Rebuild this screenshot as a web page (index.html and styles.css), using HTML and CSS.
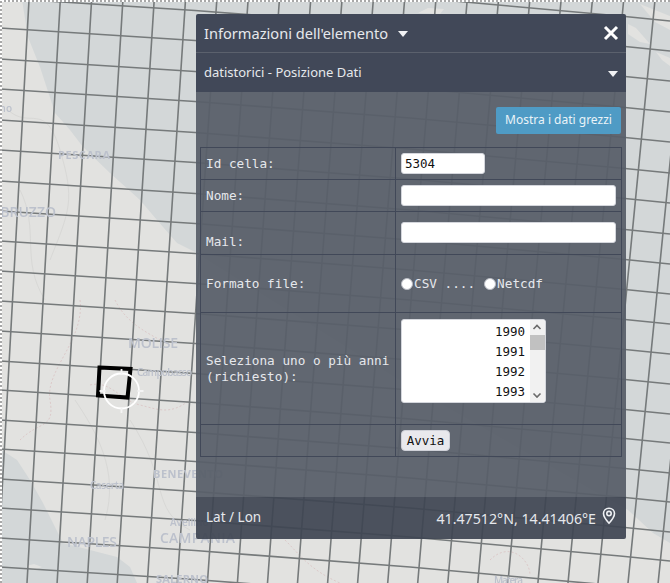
FILE: index.html
```html
<!DOCTYPE html>
<html lang="en">
<head>
    <meta charset="UTF-8">
    <meta name="viewport" content="width=device-width, initial-scale=1.0">
    <link rel="stylesheet" href="styles.css">
    <title>Informazioni dell'elemento</title>
</head>
<body>

  <svg class="map" viewBox="0 0 670 583" width="670" height="583">
    <defs>
      <polyline id="hline" points="0,0 195,12.5 410,29 620,48 670,53"/>
    </defs>
    <rect class="land" width="670" height="583"/>
    <!-- adriatic -->
    <polygon class="sea" points="22,0 28,37 40,67 55,113 70,130 83,147 110,173 140,200 157,220 177,243 197,253 400,380 628,510 653,533 670,543 670,0"/>
    <polygon class="land" points="640,4 670,16 670,30 655,22"/>
    <polygon class="land" points="628,24 636,28 650,44 640,42 628,34"/>
    <polygon class="land" points="656,52 670,58 670,66 662,60"/>
    <polygon class="land" points="418,13 428,8 444,9 440,14"/>
    <!-- tirreno -->
    <polygon class="sea" points="0,449 17,460 30,480 43,503 55,527 63,543 90,550 117,557 130,567 137,583 0,583"/>
    <polygon class="land" points="26,566 34,564 42,567 34,570"/>
    <!-- roads and borders -->
    <path class="road" d="M8 110C30 130 45 100 60 150S70 210 50 260M75 400C95 430 120 470 105 520M130 420C170 480 150 510 190 530M20 190C40 230 20 260 45 300"/>
    <path class="border" d="M80 300C85 340 45 370 50 400S40 420 20 440M90 385C110 380 120 400 140 405S170 415 190 400M115 300C125 320 140 330 170 345M285 540C300 555 310 570 340 583M490 560C510 540 530 560 530 575"/>
    <!-- grid -->
    <g class="grid">
      <path d="M29 0L-3 583M60.3 0L27 583M91.6 0L57.1 583M122.9 0L87.2 583M154.2 0L117.2 583M185.5 0L147.3 583M216.8 0L177.3 583M248.1 0L207.4 583M279.4 0L237.4 583M310.7 0L267.5 583M342 0L297.5 583M373.3 0L327.6 583M404.6 0L357.6 583M435.9 0L387.7 583M467.2 0L417.7 583M498.5 0L447.8 583M529.8 0L477.8 583M561.1 0L507.9 583M592.4 0L537.9 583M623.7 0L568 583M655 0L598 583M686.3 0L628 583M717.6 0L658.1 583M748.9 0L688 583"/>
      <use href="#hline" y="-32"/>
      <use href="#hline" y="-2"/>
      <use href="#hline" y="28"/>
      <use href="#hline" y="59"/>
      <use href="#hline" y="89"/>
      <use href="#hline" y="120"/>
      <use href="#hline" y="150"/>
      <use href="#hline" y="181"/>
      <use href="#hline" y="211"/>
      <use href="#hline" y="241"/>
      <use href="#hline" y="271"/>
      <use href="#hline" y="301"/>
      <use href="#hline" y="331"/>
      <use href="#hline" y="361"/>
      <use href="#hline" y="390"/>
      <use href="#hline" y="420"/>
      <use href="#hline" y="449"/>
      <use href="#hline" y="479"/>
      <use href="#hline" y="508"/>
      <use href="#hline" y="538"/>
      <use href="#hline" y="567"/>
    </g>
    <!-- place names -->
    <text class="city" x="58" y="159" textLength="52">PESCARA</text>
    <text class="region" x="56" y="217" text-anchor="end">ABRUZZO</text>
    <text class="town" x="12" y="112" text-anchor="end">Teramo</text>
    <text class="region" x="128" y="348" textLength="50">MOLISE</text>
    <text class="town" x="137" y="376" textLength="55">Campobasso</text>
    <text class="town" x="90" y="489" textLength="34">Caserta</text>
    <text class="city" x="153" y="478" textLength="70">BENEVENTO</text>
    <text class="town" x="170" y="526">Avellino</text>
    <text class="region" x="160" y="543" textLength="75">CAMPANIA</text>
    <text class="region" x="67" y="547" textLength="50">NAPLES</text>
    <text class="city" x="156" y="583" textLength="52">SALERNO</text>
    <text class="town" x="494" y="584" textLength="29">Matera</text>
  </svg>

  <svg class="marker" viewBox="0 0 670 583" width="670" height="583">
    <polygon class="cellBox" points="99.5,367.5 130.5,369 127.5,397.5 98,395.5"/>
    <circle class="targetRing" cx="121.5" cy="391" r="17.5"/>
    <path class="targetTick" d="M121.5 369V375M121.5 407V413M99.5 391H105.5M137.5 391H143.5"/>
  </svg>

  <div class="edgeTop"></div>
  <div class="edgeLeft"></div>

  <div class="panel">
    <div class="panelHead">
      <span class="panelTitle">Informazioni dell'elemento</span>
      <span class="caret"></span>
      <svg class="closeIcon" viewBox="0 0 16 16" width="16" height="16">
        <path d="M2 2L14 14M14 2L2 14"/>
      </svg>
    </div>
    <div class="panelSub">
      <span class="subTitle">datistorici - Posizione Dati</span>
      <span class="caret"></span>
    </div>
    <div class="panelBody">
      <div class="rawRow">
        <a class="rawBtn">Mostra i dati grezzi</a>
      </div>
      <table class="formTable">
        <colgroup>
          <col class="colLabel">
          <col>
        </colgroup>
        <tr class="rowId">
          <td>Id cella:</td>
          <td><input class="idInput" type="text" value="5304"></td>
        </tr>
        <tr class="rowName">
          <td>Nome:</td>
          <td><input class="textInput" type="text"></td>
        </tr>
        <tr class="rowMail">
          <td class="lowLabel">Mail:</td>
          <td class="topCell"><input class="textInput" type="text"></td>
        </tr>
        <tr class="rowFormat">
          <td>Formato file:</td>
          <td>
            <div class="radios">
              <input type="radio" name="fmt"><span>CSV ....</span>
              <input class="radioTwo" type="radio" name="fmt"><span>Netcdf</span>
            </div>
          </td>
        </tr>
        <tr class="rowYears">
          <td>Seleziona uno o più anni (richiesto):</td>
          <td class="yearCell">
            <div class="yearBox">
              <div class="yearList">
                <div>1990</div>
                <div>1991</div>
                <div>1992</div>
                <div>1993</div>
              </div>
              <div class="yearScroll">
                <svg viewBox="0 0 14 14" width="14" height="14"><path d="M3.5 9L7 5.5L10.5 9"/></svg>
                <div class="yearThumb"></div>
                <svg class="scrollDown" viewBox="0 0 14 14" width="14" height="14"><path d="M3.5 5.5L7 9L10.5 5.5"/></svg>
              </div>
            </div>
          </td>
        </tr>
        <tr class="rowStart">
          <td></td>
          <td><button class="startBtn" type="button">Avvia</button></td>
        </tr>
      </table>
    </div>
    <div class="panelFoot">
      <span class="footLabel">Lat / Lon</span>
      <div class="coords">
        <span>41.47512°N, 14.41406°E</span>
        <svg class="pinIcon" viewBox="0 0 14 18" width="14" height="18">
          <path d="M7 1.2C3.8 1.2 1.5 3.6 1.5 6.6C1.5 10.4 7 16.2 7 16.2S12.5 10.4 12.5 6.6C12.5 3.6 10.2 1.2 7 1.2Z"/>
          <circle cx="7" cy="6.6" r="2.2"/>
        </svg>
      </div>
    </div>
  </div>

</body>
</html>
```

FILE: styles.css
```css
html, body {
  margin: 0;
  padding: 0;
  height: 583px;
  overflow: hidden;
}

body {
  position: relative;
  background-color: #e2e2e0;
  font-family: "Noto Sans", "Open Sans", sans-serif;
}

/* map */
.map {
  position: absolute;
  left: 0;
  top: 0;
  filter: blur(0.5px);
}
.marker {
  position: absolute;
  left: 0;
  top: 0;
}
.land { fill: #e2e2e0; }
.sea { fill: #d3d7d8; }
.road {
  fill: none;
  stroke: #d8d8d6;
  stroke-width: 1;
}
.border {
  fill: none;
  stroke: #dcc9c9;
  stroke-width: 1;
  stroke-dasharray: 2 2;
}
.grid {
  fill: none;
  stroke: #767a7b;
  stroke-width: 1.6;
}
.city, .region, .town {
  fill: #bcc1cc;
  font-family: "Open Sans", sans-serif;
}
.city {
  font-size: 11px;
  font-weight: 700;
}
.region {
  font-size: 14px;
  font-weight: 600;
}
.town {
  font-size: 10px;
  font-weight: 600;
}

.cellBox {
  fill: none;
  stroke: #000;
  stroke-width: 4;
}
.targetRing {
  fill: none;
  stroke: #fff;
  stroke-width: 1.8;
}
.targetTick {
  fill: none;
  stroke: #f4f4f4;
  stroke-width: 1.8;
}

/* dotted edge of the map container */
.edgeTop, .edgeLeft {
  position: absolute;
  left: 0;
  top: 0;
  background-color: #fff;
}
.edgeTop {
  width: 670px;
  height: 2px;
  background: repeating-linear-gradient(90deg, #a8a8a8 0 2px, #fff 2px 4px);
}
.edgeLeft {
  width: 2px;
  height: 583px;
  background: repeating-linear-gradient(0deg, #a8a8a8 0 2px, #fff 2px 4px);
}

/* info window */
.panel {
  position: absolute;
  left: 196px;
  top: 14px;
  width: 430px;
  height: 525px;
  display: flex;
  flex-direction: column;
  border-radius: 2px;
  overflow: hidden;
  color: #e6e8ec;
}
.panelHead, .panelSub {
  display: flex;
  align-items: center;
  background-color: #414858;
  padding: 0 8px;
}
.panelHead {
  height: 38px;
  border-bottom: 1px solid #5b616d;
  font-size: 14.6px;
}
.panelTitle {
  margin-right: 10px;
}
.panelSub {
  height: 39px;
  justify-content: space-between;
  font-size: 13px;
  padding-right: 8px;
}
.subTitle {
  margin-top: -2px;
}
.caret {
  display: inline-block;
  width: 0;
  height: 0;
  margin-top: 2px;
  border-left: 5px solid transparent;
  border-right: 5px solid transparent;
  border-top: 6px solid #f2f3f5;
}
.closeIcon {
  margin-left: auto;
  margin-right: -1px;
}
.closeIcon path {
  fill: none;
  stroke: #fff;
  stroke-width: 3;
}

.panelBody {
  flex: 1;
  padding: 15px 4px 0;
  background-color: rgba(88, 95, 105, 0.94);
}
.rawRow {
  display: flex;
  justify-content: flex-end;
  padding-right: 1px;
}
.rawBtn {
  display: block;
  width: 125px;
  height: 27px;
  line-height: 26px;
  text-align: center;
  background-color: #4f9bc5;
  color: #eaf3f8;
  font-size: 12px;
  border-radius: 2px;
}

.formTable {
  margin-top: 13px;
  width: 422px;
  table-layout: fixed;
  border-collapse: collapse;
  font-family: "DejaVu Sans Mono", monospace;
  font-size: 12.7px;
  line-height: 16px;
}
.formTable td {
  border: 1px solid #414858;
  padding: 0 5px;
}
.colLabel { width: 195px; }
.rowId { height: 32px; }
.rowName { height: 32px; }
.rowMail { height: 43px; }
.rowFormat { height: 58px; }
.rowYears { height: 112px; }
.rowStart { height: 32px; }

.formTable td.lowLabel {
  vertical-align: bottom;
  padding-bottom: 4px;
}
.formTable td.topCell {
  vertical-align: top;
  padding-top: 10px;
}
.formTable td.yearCell {
  vertical-align: top;
  padding-top: 6px;
}

.idInput, .textInput {
  display: block;
  box-sizing: border-box;
  margin: 0;
  height: 21px;
  padding: 0 3px;
  border: 1px solid #d4d6dc;
  border-radius: 3px;
  background-color: #fff;
  color: #111;
  font-family: "DejaVu Sans Mono", monospace;
  font-size: 12.5px;
}
.idInput { width: 84px; }
.textInput { width: 100%; }

.radios {
  display: flex;
  align-items: center;
}
.radios input {
  appearance: none;
  margin: 0 1px 0 0;
  width: 12px;
  height: 12px;
  border-radius: 50%;
  background-color: #fff;
  border: 1px solid #b9bcc4;
  box-sizing: border-box;
}
.radios .radioTwo {
  margin-left: 9px;
}

.yearBox {
  display: flex;
  box-sizing: border-box;
  width: 145px;
  height: 84px;
  background-color: #fff;
  border: 1px solid #d4d6dc;
  border-radius: 3px;
  overflow: hidden;
}
.yearList {
  flex: 1;
  padding: 2px 5px 0 0;
  text-align: right;
  color: #111;
  font-size: 12.5px;
  line-height: 20px;
}
.yearScroll {
  display: flex;
  flex-direction: column;
  width: 15px;
  background-color: #f1f1f1;
}
.yearScroll svg {
  display: block;
  flex: none;
}
.yearScroll path {
  fill: none;
  stroke: #6a6a6a;
  stroke-width: 1.6;
}
.yearThumb {
  height: 15px;
  margin-top: 1px;
  background-color: #c1c1c1;
}
.scrollDown {
  margin-top: auto;
}

.startBtn {
  display: block;
  box-sizing: border-box;
  width: 49px;
  height: 21px;
  padding: 0;
  border: 1px solid #cfd1d8;
  border-radius: 4px;
  background-color: #e9e9ed;
  color: #111;
  font-family: "DejaVu Sans Mono", monospace;
  font-size: 12.5px;
}

.panelFoot {
  display: flex;
  align-items: center;
  justify-content: space-between;
  height: 42px;
  padding: 0 10px;
  background-color: rgba(62, 68, 81, 0.92);
  font-size: 14.2px;
}
.footLabel {
  font-size: 13.5px;
  margin-top: -2px;
}
.coords {
  display: flex;
  align-items: center;
}
.pinIcon {
  margin-left: 6px;
  margin-top: -4px;
}
.pinIcon path, .pinIcon circle {
  fill: none;
  stroke: #eef0f3;
  stroke-width: 1.6;
}
```
